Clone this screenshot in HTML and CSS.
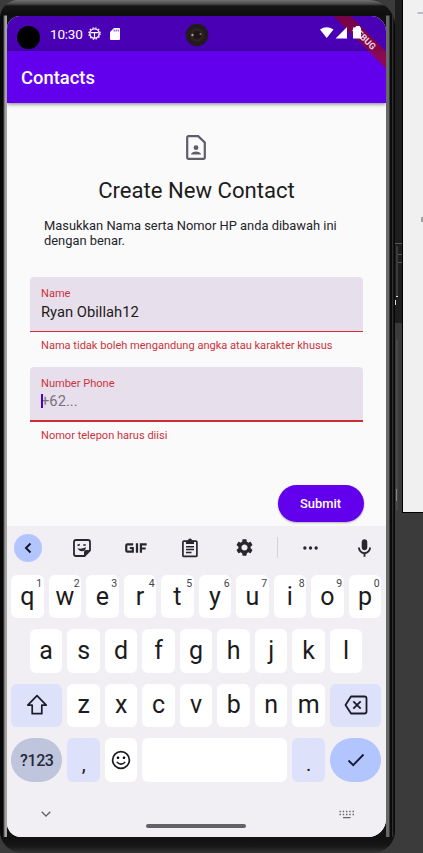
FILE: index.html
```html
<!DOCTYPE html>
<html lang="id">
<head>
<meta charset="utf-8">
<title>Contacts</title>
<link rel="stylesheet" href="styles.css">
</head>
<body>
<div class="desktop">
  <div class="phone">
    <div class="screen">
      <header class="status">
        <span class="hole"></span>
        <span class="clock">10:30</span>
        <svg class="st-bug" viewBox="0 0 14 14"><circle cx="7" cy="7" r="5" fill="none" stroke="#fff" stroke-width="1.5"/><circle cx="7" cy="7" r="6.1" fill="none" stroke="#fff" stroke-width="1.3" stroke-dasharray="1.6 1.6"/><path d="M3 6h8M7 6v6" stroke="#fff" stroke-width="1.200"/></svg>
        <svg class="st-sd" viewBox="0 0 10 12"><path fill="#fff" d="M4 0h5a1 1 0 0 1 1 1v10a1 1 0 0 1-1 1H1a1 1 0 0 1-1-1V4z"/><path d="M4.200 1.500v2M6.200 1.500v2M8.200 1.500v2" stroke="#4a00b4" stroke-width=".8"/></svg>
        <svg class="camera" viewBox="0 0 24 24"><circle cx="12" cy="12" r="11.300" fill="#211b20"/><circle cx="12" cy="12" r="7" fill="#30231f"/><circle cx="12" cy="12" r="4" fill="#1b1618"/><circle cx="7.500" cy="12" r="1.200" fill="#b79684"/><circle cx="15.500" cy="11" r="1" fill="#846c60"/></svg>
        <svg class="signals" viewBox="0 0 42 14"><path fill="#fff" d="M0 3.500Q6.700-1.200 13.500 3.500L6.700 12zM15.500 12.500h11.500V1zM34 1.500h2V0h4v1.500h1v11h-8v-11z"/></svg>
      </header>
      <div class="appbar">Contacts</div>
      <div class="ribbon"><span>DEBUG</span></div>
      <main class="content">
        <svg class="doc" viewBox="0 0 20 25"><path d="M2.500 1.200h9.700L18.800 7.500v15a1.300 1.300 0 0 1-1.300 1.300h-15a1.300 1.300 0 0 1-1.300-1.300v-20a1.300 1.300 0 0 1 1.300-1.300z" fill="none" stroke="#605c6b" stroke-width="2.200"/><circle cx="10" cy="12.700" r="2.400" fill="#605c6b"/><path fill="#605c6b" d="M5.200 19.500v-1q1.500-2 4.800-2t4.800 2v1z"/></svg>
        <h1>Create New Contact</h1>
        <p class="intro">Masukkan Nama serta Nomor HP anda dibawah ini dengan benar.</p>
        <div class="field"><label>Name</label><div class="value">Ryan Obillah12</div></div>
        <div class="error">Nama tidak boleh mengandung angka atau karakter khusus</div>
        <div class="field focused"><label>Number Phone</label><div class="value hint"><i class="caret"></i>+62...</div></div>
        <div class="error">Nomor telepon harus diisi</div>
        <button class="submit">Submit</button>
      </main>
      <section class="keyboard">
        <div class="tools">
          <span class="back"><svg width="28" height="28" viewBox="0 0 28 28"><path d="M16.500 9.500L12 14l4.500 4.500" fill="none" stroke="#15182b" stroke-width="2"/></svg></span>
          <svg class="sticker" viewBox="0 0 18 18"><path d="M3 1h12q2 0 2 2v8.500L11.500 17H3q-2 0-2-2V3q0-2 2-2z" fill="none" stroke="#29272e" stroke-width="1.800"/><path d="M17 11h-4q-2 0-2 2v4z" fill="#29272e"/><path d="M4.500 6.500l2.300-1M10.300 6h2.500" stroke="#29272e" stroke-width="1.700"/><path d="M4.500 9.300q4 1 8.500-1-.5 4-4 4-3 0-4.500-3z" fill="#29272e"/></svg>
          <svg class="gif" viewBox="0 0 24 10"><path d="M8.500 1.200H2.500q-1.200 0-1.200 1.200v5.200q0 1.200 1.200 1.200h5.600V5H5M12.500 0v10M16.600 10V1.200h6M16.600 5.500h5" fill="none" stroke="#29272e" stroke-width="2.300"/></svg>
          <svg class="clip" viewBox="0 0 18 20"><rect x="1.900" y="3.200" width="14" height="15.200" rx="1" fill="none" stroke="#29272e" stroke-width="1.700"/><path fill="#29272e" d="M5 2.500h2a2 2 0 0 1 4 0h2v3.500H5z"/><path d="M5 8.700h8M5 11.600h8M5 14.500h5.500" stroke="#29272e" stroke-width="1.500"/></svg>
          <svg class="gear" viewBox="2 2 20 20"><path fill="#29272e" d="M19.140 12.940c.04-.3.06-.61.06-.94 0-.32-.02-.64-.07-.94l2.030-1.580c.18-.14.23-.41.12-.61l-1.920-3.320c-.12-.22-.37-.29-.59-.22l-2.390.96c-.5-.38-1.030-.7-1.620-.94l-.36-2.540c-.04-.24-.24-.41-.48-.41h-3.840c-.24 0-.43.17-.47.41l-.36 2.540c-.59.24-1.130.57-1.620.94l-2.390-.96c-.22-.08-.47 0-.59.22L2.740 8.870c-.12.21-.08.47.12.61l2.030 1.580c-.05.3-.09.63-.09.94s.02.64.07.94l-2.030 1.580c-.18.14-.23.41-.12.61l1.920 3.320c.12.22.37.29.59.22l2.390-.96c.5.38 1.030.7 1.620.94l.36 2.540c.05.24.24.41.48.41h3.840c.24 0 .44-.17.47-.41l.36-2.540c.59-.24 1.130-.56 1.620-.94l2.390.96c.22.08.47 0 .59-.22l1.920-3.320c.12-.22.07-.47-.12-.61l-2.010-1.580zM12 15.600c-1.980 0-3.600-1.620-3.600-3.600s1.620-3.600 3.600-3.600 3.600 1.620 3.600 3.600-1.620 3.600-3.600 3.600z"/></svg>
          <span class="divider"></span>
          <svg class="dots" viewBox="0 0 16 4"><circle cx="2" cy="2" r="1.800"/><circle cx="8" cy="2" r="1.800"/><circle cx="14" cy="2" r="1.800"/></svg>
          <svg class="mic" viewBox="5 2 14 19"><path fill="#29272e" d="M12 14c1.660 0 3-1.340 3-3V5c0-1.660-1.340-3-3-3S9 3.340 9 5v6c0 1.660 1.340 3 3 3zm5-3c0 2.760-2.240 5-5 5s-5-2.240-5-5H5c0 3.530 2.610 6.430 6 6.920V21h2v-3.080c3.390-.49 6-3.390 6-6.920h-2z"/></svg>
        </div>
        <div class="keys">
          <div class="row"><b>q<sup>1</sup></b><b>w<sup>2</sup></b><b>e<sup>3</sup></b><b>r<sup>4</sup></b><b>t<sup>5</sup></b><b>y<sup>6</sup></b><b>u<sup>7</sup></b><b>i<sup>8</sup></b><b>o<sup>9</sup></b><b>p<sup>0</sup></b></div>
          <div class="row"><b>a</b><b>s</b><b>d</b><b>f</b><b>g</b><b>h</b><b>j</b><b>k</b><b>l</b></div>
          <div class="row"><b class="wide tint"><svg width="22" height="22" viewBox="0 0 22 22"><path d="M11 1.700L1.800 11.200h4.400v8.500h9.600v-8.500h4.400z" fill="none" stroke="#1c1d2b" stroke-width="1.700" stroke-linejoin="round"/></svg></b><b>z</b><b>x</b><b>c</b><b>v</b><b>b</b><b>n</b><b>m</b><b class="wide tint"><svg width="24" height="20" viewBox="0 0 24 20"><path d="M7 1.500h13.500q2 0 2 2v13q0 2-2 2H7L1.500 10z" fill="none" stroke="#1c1d2b" stroke-width="1.800" stroke-linejoin="round"/><path d="M9.300 6.300l7.400 7.400M16.700 6.300l-7.400 7.400" stroke="#1c1d2b" stroke-width="1.800"/></svg></b></div>
          <div class="row"><b class="wide sym">?123</b><b class="tint punct">,</b><b><svg width="20" height="20" viewBox="0 0 20 20"><circle cx="10" cy="10" r="8.400" fill="none" stroke="#1c1b20" stroke-width="1.700"/><circle cx="7" cy="7.800" r="1.300"/><circle cx="13" cy="7.800" r="1.300"/><path d="M5.800 12q4.200 4.200 8.400 0" fill="none" stroke="#1c1b20" stroke-width="1.600"/></svg></b><b class="space"></b><b class="tint punct">.</b><b class="wide enter"><svg width="18" height="14" viewBox="0 0 18 14"><path d="M1.500 7.500l4.700 4.700L16.500 1.500" fill="none" stroke="#171c31" stroke-width="1.900"/></svg></b></div>
        </div>
        <div class="nav">
          <svg class="down" viewBox="0 0 10 6"><path d="M.7.700L5 5 9.300.7" fill="none" stroke="#646368" stroke-width="1.300"/></svg>
          <span class="pill"></span>
          <svg class="kb" viewBox="0 0 15 9"><path d="M.5 1.500h15M.5 4.500h15" stroke="#646368" stroke-width="1.400" stroke-dasharray="1.400 1.850"/><path d="M4 7.700h7.500" stroke="#646368" stroke-width="1.200"/></svg>
        </div>
      </section>
    </div>
  </div>
  <div class="gutter">
    <svg width="7" height="853" viewBox="0 0 7 853"><path fill="#1e1e1e" d="M0 0h8v323H0z"/><path d="M0 243.500h7M2 246v51M3 254.500h4M3 262.500h4M2 340v170" fill="none" stroke="#575757"/><path d="M1 296.500h2M.5 300v5" stroke="#ddd" fill="none"/><path d="M1.500 489v12" stroke="#888"/></svg>
  </div>
  <div class="panel">
    <svg width="20" height="300" viewBox="0 0 20 300"><path d="M14.500 13h5.500" stroke="#9aa3ab" stroke-width="1.300"/><path d="M19 217v5" stroke="#888" stroke-width="1.500"/></svg>
  </div>
</div>
</body>
</html>
```
FILE: styles.css
```css
* { box-sizing: border-box; }
body { margin: 0; font-family: Roboto, "Liberation Sans", sans-serif; background: #3b3b3b; overflow: hidden; }
svg { display: block; flex: none; }
.desktop { display: flex; width: 423px; height: 853px; background: #3b3b3b; }
.phone {
  width: 395px; height: 853px; flex: none; padding: 16px 9px 16px 7px;
  border-radius: 18px 26px 22px 22px;
  background: linear-gradient(#737373 0, #484848 4px, #161616 6px, #0d0d0d 15px, transparent 16px, transparent 837px, #101010 837px, #161616 846px, #343434 853px),
    linear-gradient(90deg, #080808 0 3px, #555 4px, #a2a2a2 5px 7px, #111 7px 386px, #686868 386px 389px, #0b0b0b 390px 392px, #303030 392.500px, #080808 394px);
}
.screen { position: relative; height: 821px; border-radius: 13px 15px 18px 14px; overflow: hidden; background: #fafafb; display: flex; flex-direction: column; }
.status { height: 35px; flex: none; background: #4a00b4; color: #fff; display: flex; align-items: center; }
.hole { width: 23px; height: 23px; flex: none; border-radius: 50%; background: #000; margin: 7px 10px 0 10px; }
.clock { width: 38px; flex: none; font-size: 13.500px; letter-spacing: -.2px; padding-top: 1px; }
.st-bug { width: 13px; height: 13px; }
.st-sd { width: 10px; height: 12px; margin-left: 9px; }
.camera { width: 24px; height: 24px; margin: 3px 0 0 65px; }
.signals { position: relative; z-index: 3; width: 42px; height: 14px; margin-left: 111px; margin-top: -1px; }
.appbar { height: 52px; flex: none; background: #6200ed; color: #fff; font-size: 18.400px; font-weight: 500; line-height: 54px; padding-left: 14px; box-shadow: 0 1px 4px rgba(0,0,0,.5); z-index: 1; }
.ribbon { position: absolute; z-index: 2; top: 16px; right: -28px; width: 100px; height: 12px; background: linear-gradient(90deg, rgba(125,0,45,.8), rgba(155,15,50,.8)); transform: rotate(45deg); color: #ead9e8; font-size: 9px; font-weight: 700; line-height: 12px; text-align: center; }
.content { flex: 1; min-height: 0; padding: 32px 23px 0; display: flex; flex-direction: column; }
.doc { width: 20px; height: 25px; align-self: center; margin-right: 1px; }
h1 { margin: 15px 0 0; font-size: 22.100px; line-height: 30px; font-weight: 400; color: #1d1b20; text-align: center; }
.intro { margin: 13px 0 0 14px; width: 305px; font-size: 12.900px; line-height: 15px; color: #252429; }
.field { margin-top: 29px; height: 55px; flex: none; background: #e7e0ec; border-bottom: 1px solid #d02e3a; border-radius: 4px 4px 0 0; padding: 9px 11px 0; }
.field label { display: block; font-size: 11.060px; line-height: 15px; color: #cc333d; }
.value { font-size: 14.750px; line-height: 20px; color: #1d1b20; margin-top: 1px; }
.error { font-size: 11.060px; line-height: 14px; color: #cc333d; margin: 7px 0 0 11px; }
.field.focused { margin-top: 14px; border-bottom-width: 2px; border-color: #c92e32; }
.focused .value { margin-top: 0; }
.hint { position: relative; color: #77727c; }
.caret { position: absolute; left: 0; top: 3px; width: 2px; height: 14px; background: #4b00c9; }
.submit { align-self: flex-end; margin-top: 42px; width: 86px; height: 37px; flex: none; padding: 0; border: 0; border-radius: 19px; background: #6200ed; color: #fff; font: 500 12.900px Roboto, sans-serif; box-shadow: 0 1px 2px rgba(0,0,0,.3); margin-right: -.5px; }
.keyboard { height: 311px; flex: none; background: #f1eff4; }
.tools { height: 43px; display: flex; align-items: center; padding-left: 7px; }
.back { width: 28px; height: 28px; border-radius: 50%; background: #b3c5ff; }
.sticker { width: 18px; height: 18px; margin-left: 31px; }
.gif { width: 23px; height: 10px; margin-left: 34px; }
.clip { width: 18px; height: 20px; margin-left: 33px; }
.gear { width: 17px; height: 17px; margin-left: 36.500px; }
.divider { width: 1px; height: 21px; background: #d4d2d8; margin-left: 24px; }
.dots { width: 15px; height: 4px; margin-left: 25px; fill: #29272e; }
.mic { width: 13px; height: 18px; margin-left: 40.500px; }
.keys { display: flex; flex-direction: column; gap: 11px; padding: 6px 5px 0 4.300px; }
.row { display: flex; justify-content: center; gap: 5px; height: 43.400px; }
.row b { position: relative; width: 32.500px; flex: none; border-radius: 6px; background: #fff; color: #1c1b20; font-size: 25px; font-weight: 400; display: flex; align-items: center; justify-content: center; line-height: 30px; }
.row sup { position: absolute; right: 1.500px; top: 3px; font-size: 10.500px; line-height: 11px; color: #444348; }
.row .wide { width: 51.200px; }
.row .tint { background: #dde1f9; }
.row .sym { background: #bfc5dc; border-radius: 22px; font-size: 16px; font-weight: 500; letter-spacing: -.4px; padding-top: 2px; color: #252a3c; }
.row .punct { font-size: 20px; padding-top: 8px; }
.row .space { width: 145px; }
.row .enter { background: #b3c5ff; border-radius: 22px; }
.nav { height: 55px; display: flex; align-items: center; padding: 10px 0 0 34px; }
.down { width: 10px; height: 6px; }
.pill { width: 100px; height: 4px; border-radius: 2px; background: #626167; margin: 23px 0 0 95px; }
.kb { width: 15px; height: 9px; margin-left: 93px; }
.gutter { width: 7px; flex: none; }
.panel { width: 21px; height: 513px; flex: none; background: #f0f0f0; border-left: 1px solid #000; border-bottom: 1px solid #000; }
```
